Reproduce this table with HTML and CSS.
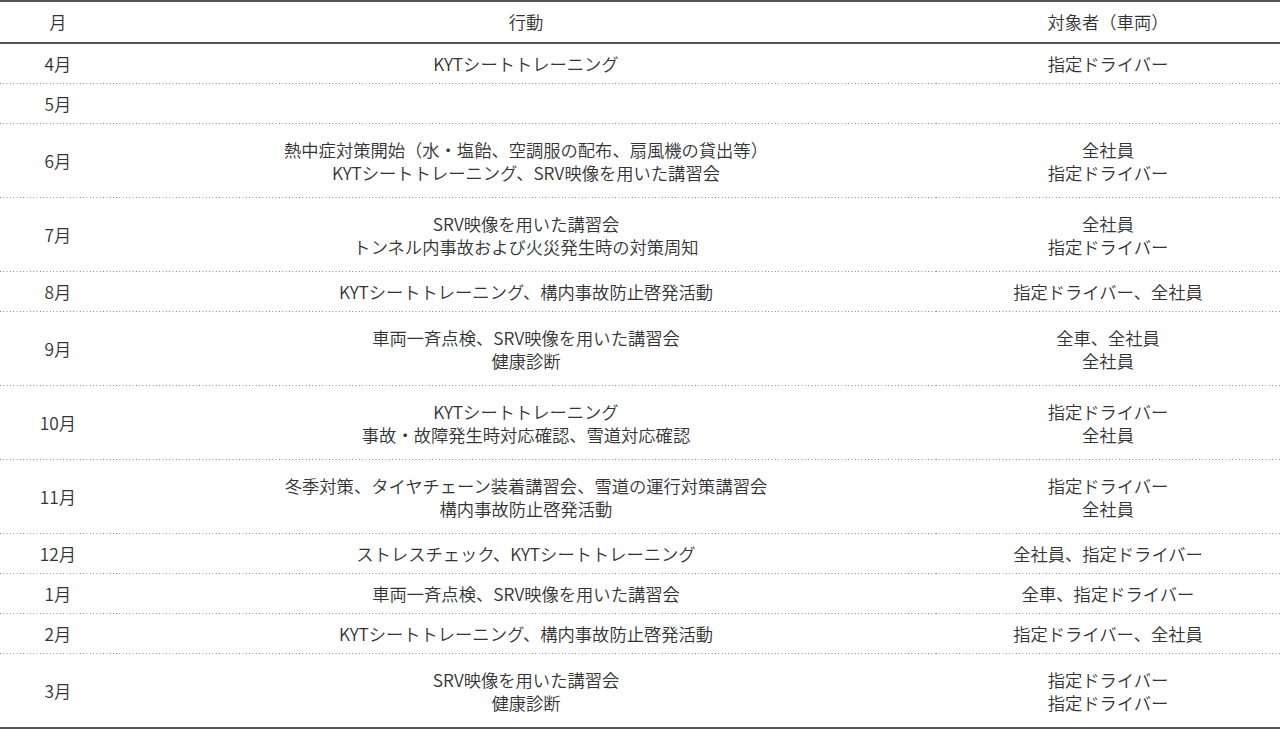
FILE: index.html
```html
<!DOCTYPE html>
<html lang="ja">
<head>
<meta charset="utf-8">
<title>年間計画</title>
<link rel="stylesheet" href="styles.css">
</head>
<body>
<table class="plan">
  <colgroup>
    <col class="c-month">
    <col class="c-action">
    <col class="c-target">
  </colgroup>
  <thead>
    <tr><th>月</th><th>行動</th><th>対象者（車両）</th></tr>
  </thead>
  <tbody>
    <tr><td>4月</td><td>KYTシートトレーニング</td><td>指定ドライバー</td></tr>
    <tr><td>5月</td><td></td><td></td></tr>
    <tr class="two"><td>6月</td><td>熱中症対策開始（水・塩飴、空調服の配布、扇風機の貸出等）<br>KYTシートトレーニング、SRV映像を用いた講習会</td><td>全社員<br>指定ドライバー</td></tr>
    <tr class="two"><td>7月</td><td>SRV映像を用いた講習会<br>トンネル内事故および火災発生時の対策周知</td><td>全社員<br>指定ドライバー</td></tr>
    <tr><td>8月</td><td>KYTシートトレーニング、構内事故防止啓発活動</td><td>指定ドライバー、全社員</td></tr>
    <tr class="two"><td>9月</td><td>車両一斉点検、SRV映像を用いた講習会<br>健康診断</td><td>全車、全社員<br>全社員</td></tr>
    <tr class="two"><td>10月</td><td>KYTシートトレーニング<br>事故・故障発生時対応確認、雪道対応確認</td><td>指定ドライバー<br>全社員</td></tr>
    <tr class="two"><td>11月</td><td>冬季対策、タイヤチェーン装着講習会、雪道の運行対策講習会<br>構内事故防止啓発活動</td><td>指定ドライバー<br>全社員</td></tr>
    <tr><td>12月</td><td>ストレスチェック、KYTシートトレーニング</td><td>全社員、指定ドライバー</td></tr>
    <tr><td>1月</td><td>車両一斉点検、SRV映像を用いた講習会</td><td>全車、指定ドライバー</td></tr>
    <tr><td>2月</td><td>KYTシートトレーニング、構内事故防止啓発活動</td><td>指定ドライバー、全社員</td></tr>
    <tr class="two last"><td>3月</td><td>SRV映像を用いた講習会<br>健康診断</td><td>指定ドライバー<br>指定ドライバー</td></tr>
  </tbody>
</table>
</body>
</html>
```

FILE: styles.css
```css
html, body {
  margin: 0;
  padding: 0;
  background: #ffffff;
}

body {
  font-family: "Noto Sans CJK JP", "Noto Sans", sans-serif;
  font-size: 17.3px;
  font-weight: 350;
  color: #333333;
}

.plan {
  width: 1280px;
  border-collapse: collapse;
  table-layout: fixed;
}

.c-month { width: 116px; }
.c-action { width: 820px; }
.c-target { width: 344px; }

.plan th {
  font-weight: 350;
  text-align: center;
  line-height: 23px;
  padding: 8px 0 9px;
  border-top: 2px solid #555555;
  border-bottom: 2px solid #555555;
}

.plan td {
  text-align: center;
  vertical-align: middle;
  line-height: 23px;
  padding: 8px 0 8px;
  height: 23px;
  border-bottom: 1px solid transparent;
  background-image: linear-gradient(to right, #7a7a7a 0, #7a7a7a 1px, transparent 1px);
  background-size: 3.33px 1px;
  background-repeat: repeat-x;
  background-position: left bottom;
  background-origin: border-box;
  background-clip: border-box;
}

.plan tr.two td {
  padding: 13.5px 0;
  height: 46px;
}

.plan tr.last td {
  border-bottom: 2px solid #555555;
  background-image: none;
}
```
